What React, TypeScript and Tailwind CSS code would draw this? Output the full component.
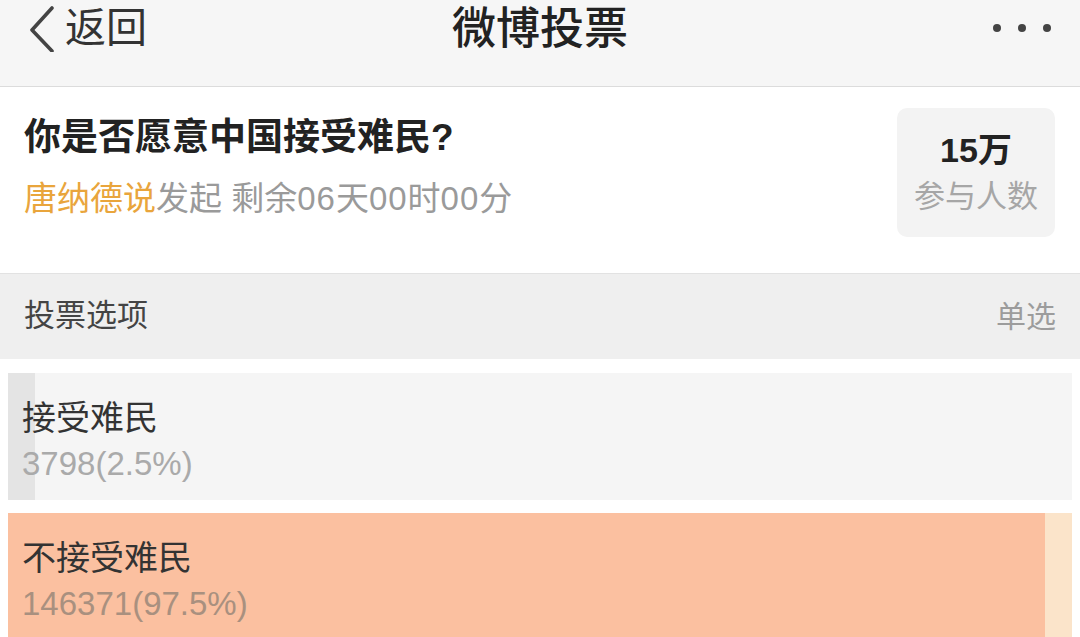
import React from 'react'

const font = { fontFamily: '"Liberation Sans", "Noto Sans CJK SC", sans-serif' }

type Option = { label: string; count: number; pct: number }

const options: Option[] = [
  { label: '接受难民', count: 3798, pct: 2.5 },
  { label: '不接受难民', count: 146371, pct: 97.5 },
]

function NavBar() {
  return (
    <div className="grid h-[87px] grid-cols-[1fr_auto_1fr] items-start border-b border-[#dcdcdc] bg-[#f6f6f6]">
      <div className="flex items-center pt-[4px] pl-[26px]">
        <svg width="30" height="48" viewBox="0 0 30 48" fill="none">
          <path d="M26 4 L6 26 L26 47" stroke="#444" strokeWidth="3.6" strokeLinecap="round" strokeLinejoin="round" />
        </svg>
        <span className="ml-[9px] text-[41px] leading-none text-[#333]">返回</span>
      </div>
      <div className="pt-[4px] text-[44px] font-medium leading-[50px] text-[#222]">微博投票</div>
      <div className="flex items-center justify-end gap-[17px] pt-[24px] pr-[29px]">
        <span className="h-[8px] w-[8px] rounded-full bg-[#444]" />
        <span className="h-[8px] w-[8px] rounded-full bg-[#444]" />
        <span className="h-[8px] w-[8px] rounded-full bg-[#444]" />
      </div>
    </div>
  )
}

function Question() {
  return (
    <div className="flex h-[186px] items-start justify-between bg-white">
      <div className="pt-[27px] pl-[24px]">
        <div className="text-[37px] font-bold leading-[48px] text-[#222]">你是否愿意中国接受难民?</div>
        <div className="mt-[16px] text-[33px] leading-[42px] text-[#9a9a9a]">
          <span className="text-[#e9a53c]">唐纳德说</span>发起 剩余<span className="tracking-[1px]">06</span>天<span className="tracking-[1px]">00</span>时<span className="tracking-[1px]">00</span>分
        </div>
      </div>
      <div className="mt-[21px] mr-[25px] flex h-[129px] w-[158px] flex-col items-center justify-center rounded-[10px] bg-[#f3f3f3]">
        <div className="text-[34px] font-bold leading-[40px] text-[#222]">15万</div>
        <div className="mt-[8px] text-[31px] leading-[38px] text-[#a6a6a6]">参与人数</div>
      </div>
    </div>
  )
}

function SectionHeader() {
  return (
    <div className="flex h-[86px] items-center justify-between border-t border-[#e2e2e2] bg-[#efefef] px-[24px]">
      <span className="text-[31px] text-[#444]">投票选项</span>
      <span className="text-[30px] text-[#9c9c9c]">单选</span>
    </div>
  )
}

function OptionRow({ opt, winner }: { opt: Option; winner: boolean }) {
  const fill = winner ? 'bg-[#fbc0a0]' : 'bg-[#e4e4e4]'
  const track = winner ? 'bg-[#fbe4ca]' : 'bg-[#f5f5f5]'
  return (
    <div className={`relative mx-[8px] h-[127px] overflow-hidden ${track}`}>
      <div className={`absolute inset-y-0 left-0 ${fill}`} style={{ width: `${opt.pct}%` }} />
      <div className="relative flex flex-col pt-[23px] pl-[14px]">
        <span className="text-[34px] leading-[44px] text-[#333]">{opt.label}</span>
        <span className={`mt-[5px] text-[33px] leading-[38px] ${winner ? 'text-[#a9907f]' : 'text-[#aaa]'}`}>
          {opt.count}({opt.pct}%)
        </span>
      </div>
    </div>
  )
}

export default function App() {
  return (
    <div className="h-[637px] w-[1080px] overflow-hidden bg-white" style={font}>
      <NavBar />
      <Question />
      <SectionHeader />
      <div className="flex flex-col gap-[13px] pt-[14px]">
        {options.map((o, i) => (
          <OptionRow key={o.label} opt={o} winner={i === 1} />
        ))}
      </div>
    </div>
  )
}
